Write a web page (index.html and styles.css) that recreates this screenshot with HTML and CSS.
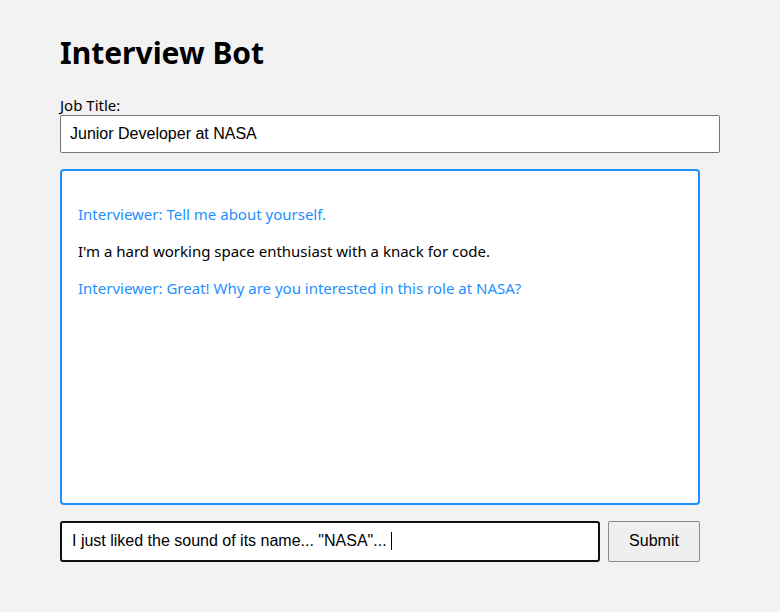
FILE: index.html
```html
<!DOCTYPE html>
<html>
<head>
<meta charset="utf-8">
<link rel="stylesheet" href="styles.css">
</head>
<body>
<div class="app">
  <h1 class="title">Interview Bot</h1>
  <label class="label" for="job">Job Title:</label>
  <input id="job" class="job-input" type="text" value="Junior Developer at NASA">
  <div class="chat">
    <p class="msg bot">Interviewer: Tell me about yourself.</p>
    <p class="msg user">I'm a hard working space enthusiast with a knack for code.</p>
    <p class="msg bot">Interviewer: Great! Why are you interested in this role at NASA?</p>
  </div>
  <div class="reply-row">
    <div class="reply-input"><span>I just liked the sound of its name... "NASA"... </span><span class="caret"></span></div>
    <button class="submit">Submit</button>
  </div>
</div>
</body>
</html>
```

FILE: styles.css
```css
html, body {
  margin: 0;
  padding: 0;
  background: #f2f2f2;
}
body {
  font-family: "Noto Sans", "Open Sans", sans-serif;
  color: #000;
}
.app {
  padding: 31px 60px 0 60px;
  width: 660px;
}
.title {
  font-size: 30px;
  font-weight: bold;
  margin: 0 0 21px 0;
  line-height: 44px;
}
.label {
  display: block;
  font-size: 15px;
  line-height: 19px;
}
.job-input {
  display: block;
  box-sizing: border-box;
  width: 660px;
  height: 38px;
  margin: 0;
  padding: 0 9px;
  border: 1px solid #767676;
  border-radius: 2px;
  background: #fff;
  font-family: "Liberation Sans", Arial, sans-serif;
  font-size: 16px;
  color: #000;
  outline: none;
}
.chat {
  box-sizing: border-box;
  width: 640px;
  height: 336px;
  margin-top: 16px;
  padding: 17px 16px;
  border: 2px solid #1e90ff;
  border-radius: 4px;
  background: #fff;
}
.msg {
  margin: 15px 0;
  font-size: 15px;
  line-height: 22px;
}
.bot { color: #1e90ff; }
.user { color: #000; }
.reply-row {
  display: flex;
  gap: 8px;
  width: 640px;
  margin-top: 16px;
}
.reply-input {
  box-sizing: border-box;
  flex: 1;
  height: 41px;
  display: flex;
  align-items: center;
  padding: 0 10px 2px 10px;
  border: 2px solid #101010;
  border-radius: 3px;
  background: #fff;
  font-family: "Liberation Sans", Arial, sans-serif;
  font-size: 16px;
  white-space: pre;
}
.caret {
  display: inline-block;
  width: 1px;
  height: 18px;
  background: #000;
}
.submit {
  box-sizing: border-box;
  width: 92px;
  height: 41px;
  border: 1px solid #8a8a8a;
  border-radius: 2px;
  background: #efefef;
  font-family: "Liberation Sans", Arial, sans-serif;
  font-size: 16px;
  color: #000;
  padding: 0 0 2px 0;
}
```
